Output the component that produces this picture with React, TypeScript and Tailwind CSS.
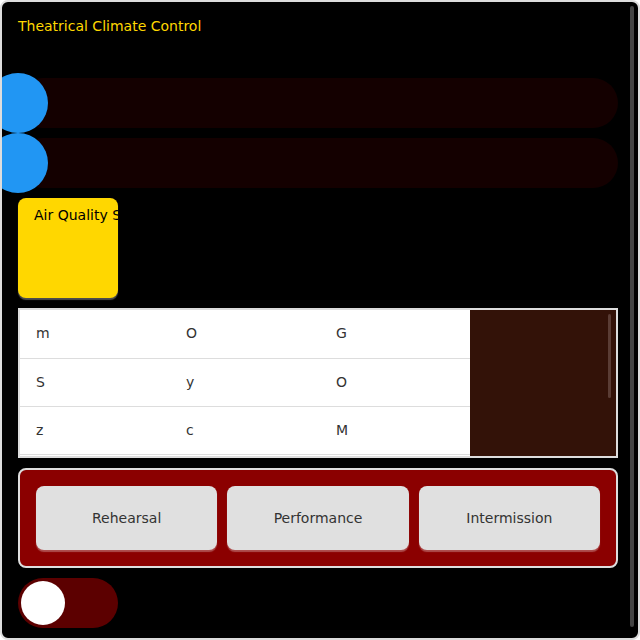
const rows = [
  ["m", "O", "G"],
  ["S", "y", "O"],
  ["z", "c", "M"],
  ["q", "a", "T"],
];

const Slider = () => {
  return (
    <div className="relative h-[50px] w-full rounded-full bg-[#140000]">
      <div className="absolute left-[-30px] top-[-5px] h-[60px] w-[60px] rounded-full bg-[#2196f3]" />
    </div>
  );
};

export default function App() {
  return (
    <div
      className="relative h-[640px] w-[640px] overflow-hidden rounded-[8px] border-2 border-[#dddddd] bg-black"
      style={{ fontFamily: '"DejaVu Sans", sans-serif' }}
    >
      <div className="flex flex-col gap-[10px] py-4 pl-4 pr-5">
        <h1 className="mb-[33px] text-[14px] leading-[17px] font-normal text-[#ffd700]">
          Theatrical Climate Control
        </h1>
        <Slider />
        <Slider />
        <div className="h-[100px] w-[100px] overflow-hidden whitespace-nowrap rounded-[8px] bg-[#ffd700] px-4 pt-[9px] text-[14px] leading-[17px] text-black shadow-[0_2px_1px_rgba(255,255,255,0.3)]">
          Air Quality Status
        </div>
        <div className="relative h-[150px] w-full overflow-hidden border-2 border-[#dddddd] bg-[#331208]">
          <table className="w-[450px] table-fixed border-collapse bg-white text-[14px] text-[#333333]">
            <tbody>
              {rows.map((r, i) => (
                <tr key={i} className="h-[48px] border-b border-[#dddddd]">
                  {r.map((c, j) => (
                    <td key={j} className="w-[150px] px-4">
                      {c}
                    </td>
                  ))}
                </tr>
              ))}
            </tbody>
          </table>
          <div className="absolute right-[5px] top-[4px] h-[84px] w-[3px] rounded-full bg-[#5a3c34]" />
        </div>
        <div className="flex gap-[10px] rounded-[8px] border-2 border-[#dddddd] bg-[#8b0000] p-4">
          {["Rehearsal", "Performance", "Intermission"].map((b) => (
            <button
              key={b}
              className="h-[64px] flex-1 rounded-[8px] bg-[#e0e0e0] text-[14px] text-[#333333] shadow-[0_2px_1px_rgba(255,255,255,0.3)]"
            >
              {b}
            </button>
          ))}
        </div>
        <div className="flex h-[50px] w-[100px] items-center rounded-full bg-[#5c0000] px-[3px]">
          <div className="h-[44px] w-[44px] rounded-full bg-white" />
        </div>
      </div>
      <div className="absolute right-[4px] top-[4px] h-[621px] w-[4px] rounded-full bg-[#444444]" />
    </div>
  );
}
